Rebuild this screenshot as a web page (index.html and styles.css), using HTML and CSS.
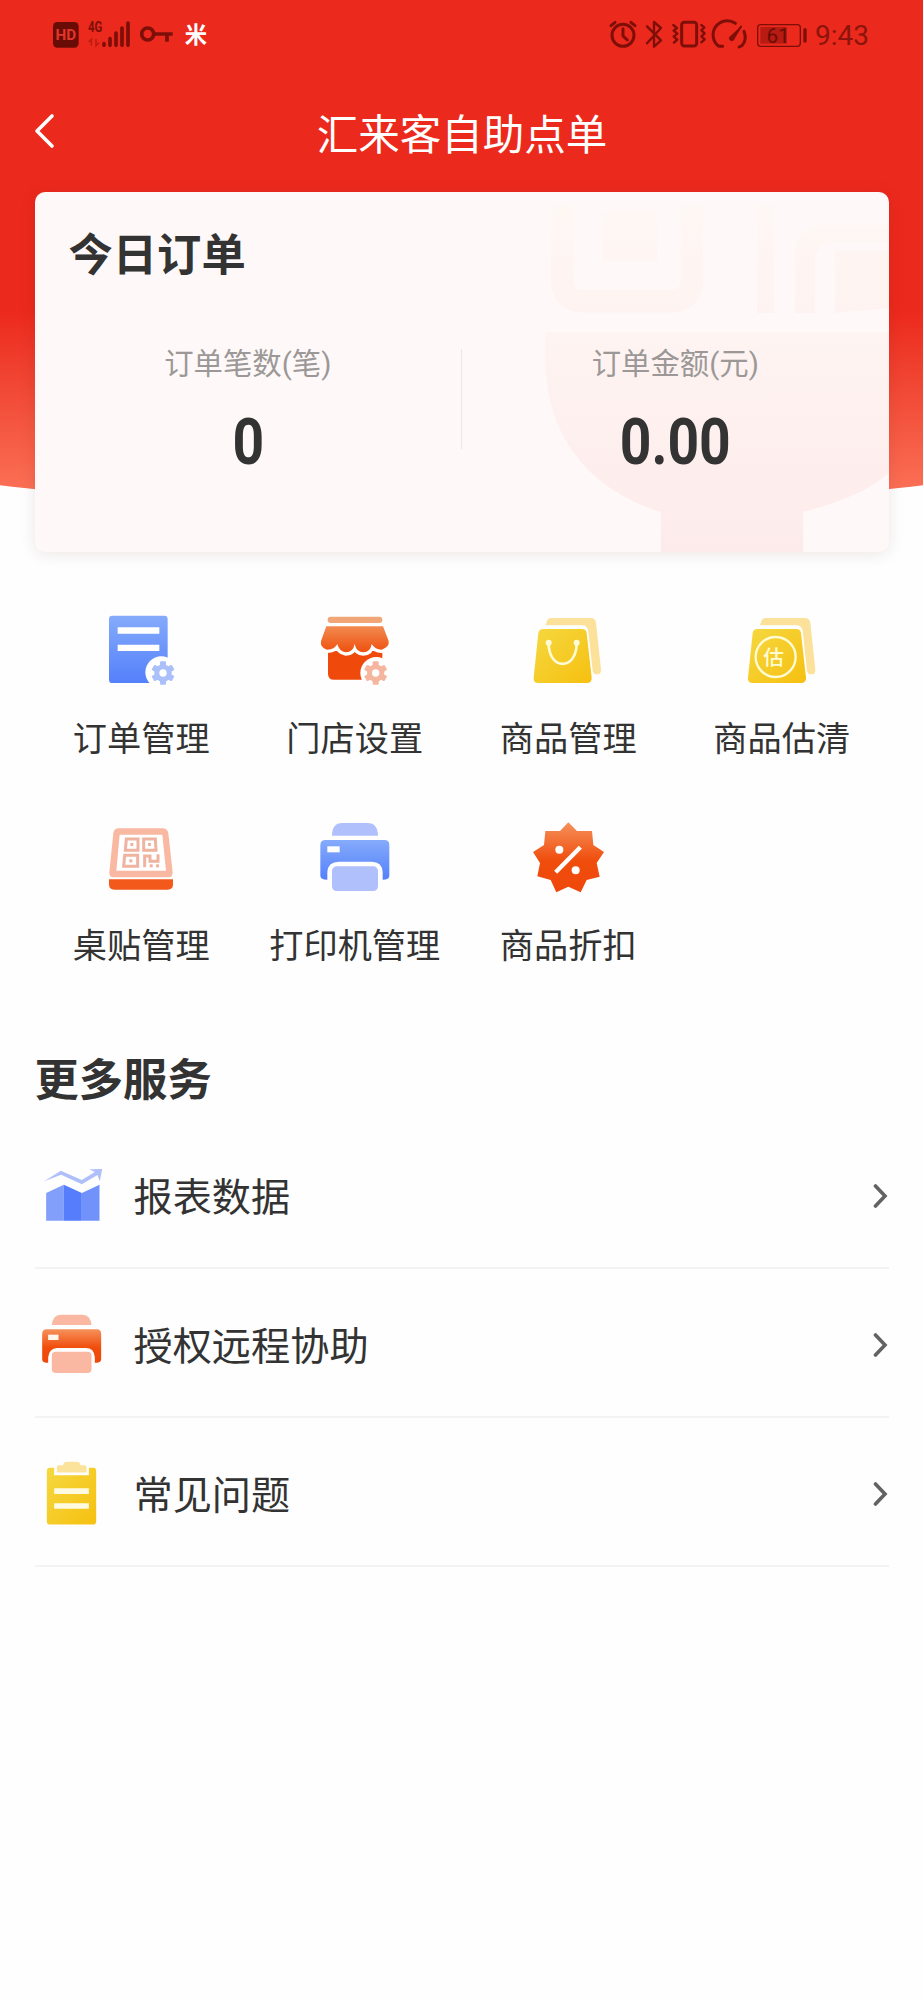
FILE: index.html
```html
<!DOCTYPE html>
<html lang="zh-CN">
<head>
<meta charset="utf-8">
<title>汇来客自助点单</title>
<link rel="stylesheet" href="styles.css">
</head>
<body>
<svg class="defs" width="0" height="0" aria-hidden="true">
  <defs>
    <linearGradient id="blue" x1="0" y1="0" x2="0" y2="1"><stop offset="0" stop-color="#85abfb"/><stop offset="1" stop-color="#5480fb"/></linearGradient>
    <linearGradient id="orange" x1="0" y1="0" x2="0" y2="1"><stop offset="0" stop-color="#f5915b"/><stop offset=".55" stop-color="#f04d0c"/><stop offset="1" stop-color="#ef470b"/></linearGradient>
    <linearGradient id="awning" x1="0" y1="0" x2="0" y2="1"><stop offset="0" stop-color="#f28a50"/><stop offset="1" stop-color="#ef500f"/></linearGradient>
    <linearGradient id="yellow" x1="0" y1="0" x2="1" y2="1"><stop offset="0" stop-color="#f5d840"/><stop offset="1" stop-color="#f6c010"/></linearGradient>
    <g id="gear">
      <g fill="currentColor">
        <circle r="26"/>
        <rect x="-9" y="-35" width="18" height="70" rx="3"/>
        <rect x="-9" y="-35" width="18" height="70" rx="3" transform="rotate(60)"/>
        <rect x="-9" y="-35" width="18" height="70" rx="3" transform="rotate(120)"/>
      </g>
      <circle r="11" fill="#fff"/>
    </g>
  </defs>
</svg>
<div class="page">
  <header class="hero">
    <div class="status">
      <svg width="240" height="70" viewBox="0 0 720 210">
        <rect x="69" y="66" width="77" height="77" rx="13" fill="#6a0c06"/>
        <text x="107.500" y="121" font-size="45" font-weight="700" text-anchor="middle" textLength="62" lengthAdjust="spacingAndGlyphs" fill="#e0362b">HD</text>
        <text x="174" y="97" font-size="46" font-weight="700" textLength="43" lengthAdjust="spacingAndGlyphs" fill="#7d0f08">4G</text>
        <path d="M184 137V118l-8 8M198 117v20l9-9" fill="none" stroke="#c01c12" stroke-width="5"/>
        <g stroke="#7d0f08" stroke-width="11" stroke-linecap="round"><path d="M222 131v5M240 116v20M258 99v37M276 84v52M294 69v67"/></g>
        <g fill="none" stroke="#7d0f08" stroke-width="11"><circle cx="353" cy="102" r="18"/><path d="M372 102h56M411 102v23"/></g>
        <text x="498" y="129" font-size="67" font-weight="700" text-anchor="middle" fill="#fff">米</text>
      </svg>
      <svg width="300" height="70" viewBox="0 0 900 210">
        <g fill="none" stroke="#7d0f08" stroke-width="9" stroke-linecap="round" stroke-linejoin="round">
          <circle cx="99" cy="106" r="33"/><path d="M99 86v22l13 12M63 77l12-10M123 67l12 10"/>
          <path d="M171 79l42 42-21 19V66l21 18-42 46" stroke-width="7"/>
          <rect x="275" y="67" width="45" height="71" rx="8"/>
          <path d="M261 84l-10 8 11 9-11 9 11 9-10 9M250 75l7 6M334 75l9 7-9 9 10 9-10 9 10 9-10 9" stroke-width="7"/>
          <path d="M398 139L387 139A40 40 0 0 1 436 70M462 94A42 42 0 0 1 456 137L447 141"/>
          <path d="M453 80l-27 38" stroke-width="6"/><path d="M453 80L418 112a8 8 0 0 0 12 9Z" fill="#7d0f08" stroke-width="2"/>
          <rect x="503" y="74" width="128" height="65" rx="9" stroke-width="4"/>
          <path d="M645 89v34" stroke-width="10"/>
        </g>
        <rect x="511" y="81" width="80" height="50" fill="#b81b12"/>
        <text x="564" y="128" font-size="62" text-anchor="middle" fill="#6a0c06">61</text>
        <text x="675" y="135" font-size="85" textLength="162" lengthAdjust="spacingAndGlyphs" fill="#8b140c">9:43</text>
      </svg>
    </div>
    <nav class="titlebar">
      <svg class="back" width="34" height="40" viewBox="0 0 34 40"><path d="M19 5L4 20 19 35" fill="none" stroke="#fff" stroke-width="3.600" stroke-linecap="round" stroke-linejoin="round"/></svg>
      <h1 class="title">汇来客自助点单</h1>
      <span class="back"></span>
    </nav>
  </header>

  <main class="content">
    <section class="card">
      <svg class="bowl" width="344" height="360" viewBox="545 192 344 360">
        <defs>
          <linearGradient id="bowlfill" x1="0" y1="0" x2="0" y2="1"><stop offset="0" stop-color="#fef4f2"/><stop offset="1" stop-color="#fdebeb"/></linearGradient>
          <linearGradient id="markfill" gradientUnits="userSpaceOnUse" x1="0" y1="200" x2="0" y2="313"><stop offset="0" stop-color="#fef8f5"/><stop offset="1" stop-color="#fef3f1"/></linearGradient>
        </defs>
        <path d="M562 206V277Q562 301 582 301H672Q692 301 692 277V206" fill="none" stroke="url(#markfill)" stroke-width="23"/>
        <path d="M603 212H657V261H603ZM757 205H774V313H757ZM795 313V255Q795 225 825 225H889V242H835Q815 242 815 262V313ZM835 313V250H889V308Z" fill="url(#markfill)"/>
        <path d="M545 332H889V473Q862 497 803 512V552H661V512C583 488 545 430 545 355Z" fill="url(#bowlfill)"/>
      </svg>
      <h2 class="heading card-heading">今日订单</h2>
      <div class="stats">
        <div class="stat"><div class="stat-label">订单笔数(笔)</div><div class="stat-value">0</div></div>
        <div class="stat-divider"></div>
        <div class="stat"><div class="stat-label">订单金额(元)</div><div class="stat-value">0.00</div></div>
      </div>
    </section>

    <section class="grid">
      <a class="item">
        <svg width="80" height="90" viewBox="64 45 240 270">
          <rect x="88" y="77" width="176" height="202" rx="10" fill="url(#blue)"/>
          <path d="M114 121.500H239M114 173.500H239" stroke="#fff" stroke-width="19"/>
          <circle cx="245" cy="247" r="48" fill="#fff"/>
          <use href="#gear" x="250" y="249" color="#abc0fa"/>
        </svg>
        <span class="label">订单管理</span>
      </a>
      <a class="item">
        <svg width="80" height="90" viewBox="704 45 240 270">
          <path d="M743 180H906V269H761Q743 269 743 251Z" fill="#ef4a0c"/>
          <path d="M738 109H908L925 153Q928 171 904 179Q884 179 874 162Q870 187 849 187Q828 186 823 162Q818 187 797 187Q776 184 771 162Q763 179 740 179Q718 172 722 153Z" fill="url(#awning)" stroke="#fff" stroke-width="20" paint-order="stroke"/>
          <rect x="742" y="80" width="164" height="19" rx="9" fill="#f0a676"/>
          <circle cx="888" cy="249" r="48" fill="#fff"/>
          <use href="#gear" x="886" y="249" color="#f5b6a0"/>
        </svg>
        <span class="label">门店设置</span>
      </a>
      <a class="item">
        <svg width="80" height="90" viewBox="84 45 240 270">
          <path id="sheet" d="M137 106L140 95Q143 84 154 84H272Q285 84 288 98L303 239Q303 253 291 253Q280 253 278 242L265 123Q262 106 246 106Z" fill="#fbe19a"/>
          <path id="bag" d="M130 117H246Q258 117 260 129L275 263Q276 279 260 279H116Q99 279 101 263L115 129Q117 117 130 117Z" fill="url(#yellow)"/>
          <path d="M146 160C146 242 230 242 230 160" fill="none" stroke="#fffbd5" stroke-width="8"/><circle cx="146" cy="158" r="9" fill="#fffbd5"/><circle cx="230" cy="158" r="9" fill="#fffbd5"/>
        </svg>
        <span class="label">商品管理</span>
      </a>
      <a class="item">
        <svg width="80" height="90" viewBox="724 45 240 270">
          <use href="#sheet" x="641"/><use href="#bag" x="641"/>
          <circle cx="825" cy="201" r="60" fill="none" stroke="#fffbd5" stroke-width="7"/>
          <text x="819" y="224" font-size="62" font-weight="500" text-anchor="middle" fill="#fffbd5">估</text>
        </svg>
        <span class="label">商品估清</span>
      </a>
      <a class="item">
        <svg width="80" height="90" viewBox="124 34 240 270">
          <path d="M148 236H340V251Q340 267 324 267H164Q148 267 148 251Z" fill="#f2591b"/>
          <path d="M178 83H308Q323 83 326 98L339 215Q339 230 327 230H161Q148 230 149 215L161 98Q163 83 178 83Z" fill="#f9b8a2"/>
          <path d="M180 102H308L319 210H170Z" fill="#fff"/>
          <g fill="none" stroke="#efb3a0" stroke-width="9"><path d="M200 115H235V149H197ZM252 115H287L289 149H252ZM195 164H234V197H192ZM255 200V166H271V182H295V161"/></g>
          <g fill="#efb3a0"><rect x="212" y="127" width="9" height="9"/><rect x="265" y="127" width="9" height="9"/><rect x="209" y="176" width="9" height="9"/><rect x="270" y="191" width="9" height="9"/><rect x="289" y="191" width="9" height="9"/></g>
        </svg>
        <span class="label">桌贴管理</span>
      </a>
      <a class="item">
        <svg width="80" height="90" viewBox="764 34 240 270">
          <path d="M815 105Q815 67 846 67H922Q952 67 953 105Z" fill="#b0c0fc"/>
          <path d="M796 118H972Q987 118 987 133V225Q987 237 967 237V214Q965 183 934 183H836Q803 183 801 214V237Q780 237 780 225V133Q780 118 796 118Z" fill="url(#blue)"/>
          <rect x="801" y="137" width="37" height="18" fill="#fff"/>
          <rect x="815" y="197" width="138" height="74" rx="14" fill="#b0c0fc"/>
        </svg>
        <span class="label">打印机管理</span>
      </a>
      <a class="item">
        <svg width="80" height="90" viewBox="84 34 240 270">
          <path d="M205 65L231 91L276 91L280 133L312 154L290 187L299 228L260 238L242 275L205 258L169 275L152 238L112 227L120 187L99 154L132 133L136 91L180 91Z" fill="url(#orange)"/>
          <path d="M167 215L241 140" stroke="#fff" stroke-width="13"/><circle cx="178" cy="147" r="12" fill="#fff"/><circle cx="227" cy="209" r="12" fill="#fff"/>
        </svg>
        <span class="label">商品折扣</span>
      </a>
    </section>

    <h2 class="heading more-heading">更多服务</h2>
    <ul class="list">
      <li class="row">
        <svg width="72" height="72" viewBox="44.500 354 216 216">
          <path d="M78 459L131 434V542H78Z" fill="#819ffb"/><path d="M131 434L185 459V542H131Z" fill="#567dfb"/><path d="M185 459L238 434V542H185Z" fill="#7192fb"/>
          <path d="M72 424L122 392L185 420L224 396L208 388L246 387L239 424L232 405L185 433L123 404Z" fill="#afbffa"/>
        </svg>
        <span class="row-label">报表数据</span>
        <svg class="chevron" width="16" height="26" viewBox="0 0 16 26"><path d="M2.500 3L12 13 2.500 23" fill="none" stroke="#626262" stroke-width="3.600" stroke-linecap="round"/></svg>
      </li>
      <li class="row">
        <svg width="72" height="72" viewBox="44.500 51 216 216">
          <path d="M95 105Q98 74 122 74H187Q211 74 214 105Z" fill="#fab8a2"/>
          <path d="M79 118H230Q243 118 243 132V207Q243 220 224 218V202Q222 174 197 174H111Q86 176 84 202V218Q66 220 66 207V132Q66 118 79 118Z" fill="url(#orange)"/>
          <rect x="84" y="134" width="31" height="16" fill="#fff6ee"/>
          <rect x="95" y="185" width="119" height="64" rx="12" fill="#fab8a2"/>
        </svg>
        <span class="row-label">授权远程协助</span>
        <svg class="chevron" width="16" height="26" viewBox="0 0 16 26"><path d="M2.500 3L12 13 2.500 23" fill="none" stroke="#626262" stroke-width="3.600" stroke-linecap="round"/></svg>
      </li>
      <li class="row">
        <svg width="72" height="72" viewBox="44.500 496.500 216 216">
          <path d="M90 532H102V554H206V532H219Q228 532 228 542V692Q228 702 218 702H90Q80 702 80 692V542Q80 532 90 532Z" fill="url(#yellow)"/>
          <path d="M110 546V529Q110 524 116 524H128Q132 514 140 514H170Q178 514 181 524H193Q199 524 199 530V546Z" fill="#fbe39b"/>
          <path d="M102 602H206M102 646.500H206" stroke="#fffbe0" stroke-width="17"/>
        </svg>
        <span class="row-label">常见问题</span>
        <svg class="chevron" width="16" height="26" viewBox="0 0 16 26"><path d="M2.500 3L12 13 2.500 23" fill="none" stroke="#626262" stroke-width="3.600" stroke-linecap="round"/></svg>
      </li>
    </ul>
  </main>
</div>
</body>
</html>
```
FILE: styles.css
```css
* {
  box-sizing: border-box;
  margin: 0;
  padding: 0;
}

body {
  background: #fefefe;
  color: #323332;
  font-family: Roboto, "Noto Sans CJK SC", sans-serif;
}

svg {
  display: block;
  flex: none;
}

.defs {
  position: absolute;
}

.page {
  width: 923px;
  min-height: 2000px;
  overflow: hidden;
}

.hero {
  height: 500px;
  margin-bottom: -308px;
  background: linear-gradient(#ec291d 0, #ec291d 310px, #f14935 390px, #fc7359 500px);
  clip-path: ellipse(1800px 800px at 50% -288px);
}

.status {
  display: flex;
  justify-content: space-between;
  padding: 0 33px 0 30px;
}

.titlebar {
  display: flex;
  align-items: center;
  justify-content: space-between;
  height: 122px;
  padding: 0 32px 0 33px;
}

.back {
  width: 34px;
}

.title {
  margin-top: 9px;
  color: #fff;
  font-size: 41.5px;
  font-weight: 400;
  line-height: 60px;
}

.content {
  position: relative;
  padding: 0 34.5px;
}

.card {
  position: relative;
  height: 360px;
  padding: 34px 0 0;
  overflow: hidden;
  border-radius: 10px;
  background: #fef9f8;
  box-shadow: 0 2px 16px rgba(80, 20, 10, .1);
}

.bowl {
  position: absolute;
  top: 0;
  right: 0;
}

.heading {
  font-size: 44.3px;
  font-weight: 700;
  line-height: 60px;
}

.card-heading {
  position: relative;
  padding-left: 34px;
}

.stats {
  position: relative;
  display: flex;
  margin-top: 56px;
}

.stat {
  flex: 1;
  text-align: center;
}

.stat-divider {
  width: 1px;
  height: 100px;
  margin-top: 7px;
  background: #ebe7e6;
}

.stat-label {
  color: #9b9897;
  font-size: 29.4px;
  line-height: 44px;
}

.stat-value {
  margin-top: 21px;
  font-size: 65px;
  font-weight: 700;
  line-height: 70px;
  transform: scaleX(.85);
}

.grid {
  display: grid;
  grid-template-columns: repeat(4, 1fr);
  row-gap: 48.5px;
  padding-top: 53px;
}

.item {
  display: flex;
  flex-direction: column;
  align-items: center;
  gap: 20px;
}

.label {
  font-size: 34.2px;
  line-height: 48px;
  white-space: nowrap;
}

.more-heading {
  margin: 81.5px 0 8.5px;
}

.list {
  list-style: none;
}

.row {
  display: flex;
  align-items: center;
  height: 149px;
  padding-top: 2px;
  border-bottom: 2px solid #f3f3f3;
}

.row-label {
  flex: 1;
  padding: 8px 0 0 27px;
  font-size: 39.2px;
  line-height: 56px;
}

.chevron {
  margin: 3px 0 0;
}
```
